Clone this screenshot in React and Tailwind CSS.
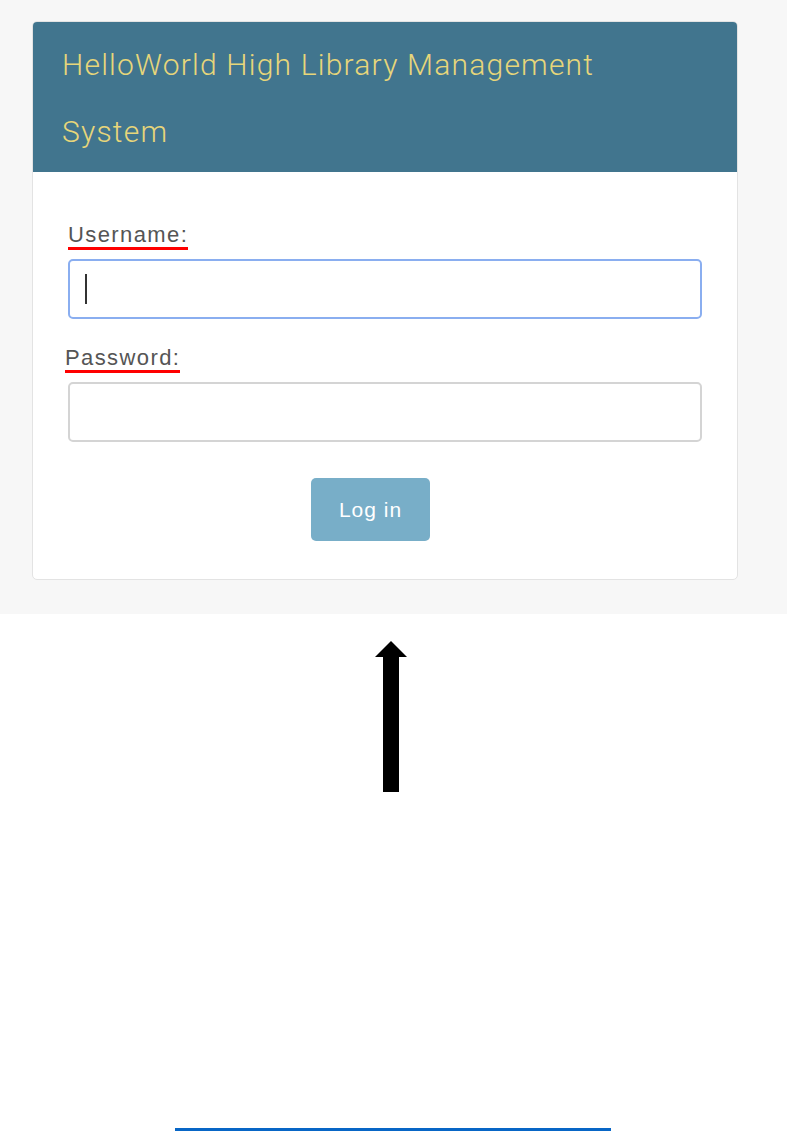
import React from 'react';

const App = () => {
    return (
        <div className="min-h-[1131px] bg-white relative" style={{ fontFamily: '"Liberation Sans", Arial, sans-serif' }}>
            <div className="bg-[#f7f7f7] pt-[21px] pb-[34px] px-[32px] w-full">
                <div className="w-[706px] rounded-[5px] border border-[#e3e3e3] bg-white overflow-hidden">
                    {/* header */}
                    <div className="bg-[#41758e] h-[150px] pl-[29px] pt-[9px]" style={{ fontFamily: 'Roboto, sans-serif' }}>
                        <h1 className="max-w-[580px] text-[#e7d67a] text-[30px] leading-[67px] tracking-[1.2px] font-light">
                            HelloWorld High Library Management System
                        </h1>
                    </div>

                    {/* form */}
                    <form className="px-[35px] pt-[51px] pb-[38px]">
                        <label className="inline-block text-[22px] leading-[24px] tracking-[1.4px] text-[#555] border-b-[3px] border-[#f00] pb-[0px]">
                            Username:
                        </label>
                        <div className="mt-[9px] h-[60px] rounded-[5px] border-2 border-[#8aaef0] flex items-center pl-[15px]">
                            <span className="block w-[2px] h-[30px] bg-[#333]" />
                        </div>

                        <label className="inline-block mt-[27px] -ml-[3px] text-[22px] leading-[24px] tracking-[1.4px] text-[#555] border-b-[3px] border-[#f00] pb-[0px]">
                            Password:
                        </label>
                        <div className="mt-[9px] h-[60px] rounded-[5px] border-2 border-[#d4d4d4]" />

                        <div className="flex justify-center mt-[36px] pr-[29px]">
                            <button type="button" className="w-[119px] h-[63px] rounded-[5px] bg-[#78aec8] text-white text-[21px] tracking-[1px]">
                                Log in
                            </button>
                        </div>
                    </form>
                </div>
            </div>

            {/* arrow */}
            <div className="flex justify-center pt-[27px] pr-[5px]">
                <svg width="34" height="151" viewBox="0 0 34 151">
                    <polygon points="17,0 33,16 25,16 25,151 9,151 9,16 1,16" fill="#000" />
                </svg>
            </div>

            {/* bottom line */}
            <div className="absolute left-[175px] bottom-0 w-[436px] h-[3px] bg-[#0866c6]" />
        </div>
    );
};

export default App;
